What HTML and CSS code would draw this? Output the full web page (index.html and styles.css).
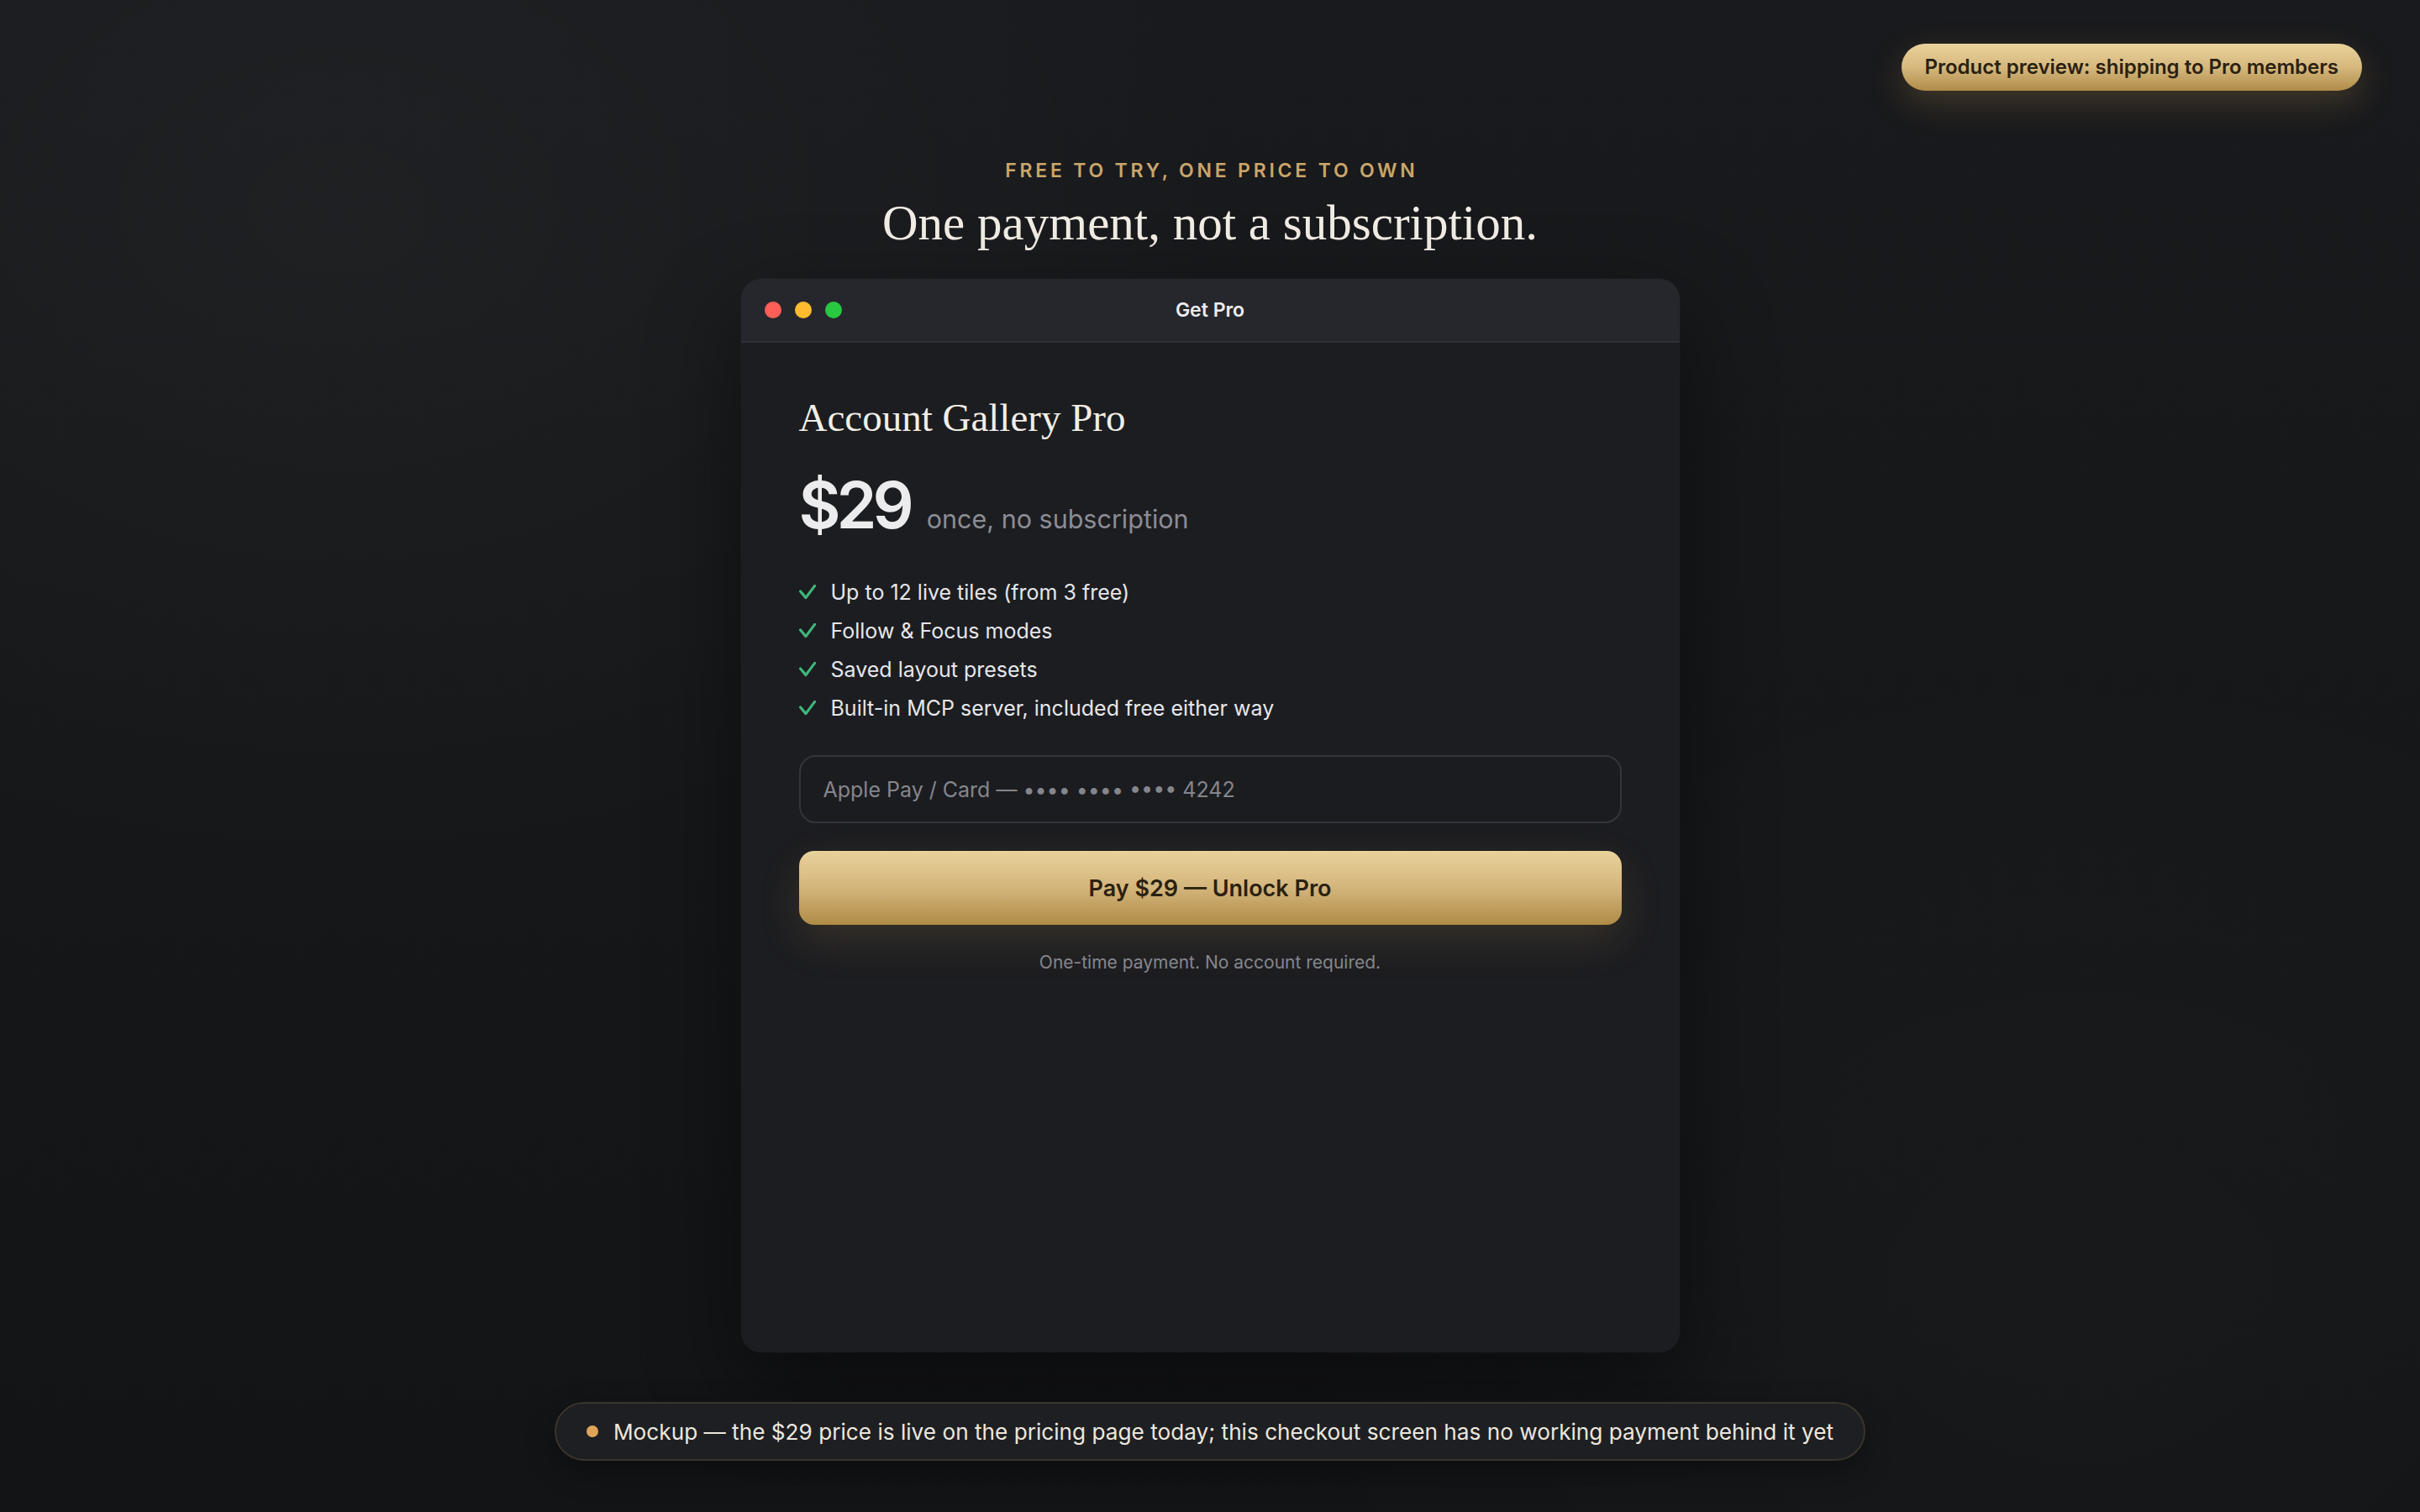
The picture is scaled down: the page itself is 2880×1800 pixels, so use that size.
FILE: index.html
```html
<!DOCTYPE html>
<html lang="en">
<head>
<meta charset="utf-8">
<title>Get Pro</title>
<link rel="stylesheet" href="styles.css">
</head>
<body>
<div class="badge">Product preview: shipping to Pro members</div>
<main class="page">
  <p class="eyebrow">FREE TO TRY, ONE PRICE TO OWN</p>
  <h1 class="headline">One payment, not a subscription.</h1>
  <section class="window">
    <header class="titlebar">
      <div class="lights">
        <span class="light red"></span>
        <span class="light yellow"></span>
        <span class="light green"></span>
      </div>
      <div class="title">Get Pro</div>
      <div></div>
    </header>
    <div class="content">
      <h2 class="product">Account Gallery Pro</h2>
      <div class="price-row">
        <span class="price">$29</span>
        <span class="price-note">once, no subscription</span>
      </div>
      <ul class="features">
        <li><svg class="check" viewBox="0 0 20 18"><polyline points="1.6,8 8,15.6 18.6,1.4"/></svg><span>Up to 12 live tiles (from 3 free)</span></li>
        <li><svg class="check" viewBox="0 0 20 18"><polyline points="1.6,8 8,15.6 18.6,1.4"/></svg><span>Follow &amp; Focus modes</span></li>
        <li><svg class="check" viewBox="0 0 20 18"><polyline points="1.6,8 8,15.6 18.6,1.4"/></svg><span>Saved layout presets</span></li>
        <li><svg class="check" viewBox="0 0 20 18"><polyline points="1.6,8 8,15.6 18.6,1.4"/></svg><span>Built-in MCP server, included free either way</span></li>
      </ul>
      <div class="card-field">Apple Pay / Card — •••• •••• •••• 4242</div>
      <button class="pay">Pay $29 — Unlock Pro</button>
      <p class="fine">One-time payment. No account required.</p>
    </div>
  </section>
  <div class="notice"><span class="notice-dot"></span><span>Mockup — the $29 price is live on the pricing page today; this checkout screen has no working payment behind it yet</span></div>
</main>
</body>
</html>
```
FILE: styles.css
```css
html, body {
  margin: 0;
  padding: 0;
}
body {
  min-height: 1800px;
  font-family: Inter, "Noto Sans", "Liberation Sans", sans-serif;
  color: #e8e8ea;
  background:
    radial-gradient(ellipse 38% 45% at 14% 14%, rgba(255,255,255,0.03), rgba(255,255,255,0) 100%),
    radial-gradient(ellipse 35% 45% at 86% 86%, rgba(255,255,255,0.018), rgba(255,255,255,0) 100%),
    linear-gradient(180deg, #191a1d 0%, #161719 55%, #131416 100%);
  position: relative;
  overflow: hidden;
}
.badge {
  position: absolute;
  top: 52px;
  right: 69px;
  height: 56px;
  line-height: 56px;
  padding: 0 28px;
  border-radius: 28px;
  font-size: 24px;
  font-weight: 600;
  color: #2a2110;
  background: linear-gradient(180deg, #e9d29b 0%, #d6b87e 50%, #b08c48 100%);
  box-shadow: 0 14px 40px rgba(212, 168, 86, 0.22);
}
.page {
  display: flex;
  flex-direction: column;
  align-items: center;
  padding-top: 187px;
}
.eyebrow {
  margin: 0;
  font-size: 23px;
  line-height: 32px;
  font-weight: 600;
  letter-spacing: 0.165em;
  color: #c9a66b;
  padding-left: 0.165em;
}
.headline {
  margin: 13px 0 0;
  font-family: "Liberation Serif", "DejaVu Serif", serif;
  font-weight: 400;
  font-size: 59px;
  line-height: 66px;
  color: #f2eee6;
}
.window {
  margin-top: 34px;
  width: 1117px;
  height: 1278px;
  box-sizing: border-box;
  background: #1c1d21;
  border-radius: 24px;
  overflow: hidden;
  box-shadow: 0 40px 110px rgba(0, 0, 0, 0.45), 0 0 0 1px rgba(255, 255, 255, 0.02);
}
.titlebar {
  height: 74px;
  border-bottom: 2px solid #2f3035;
  background: #26272c;
  display: grid;
  grid-template-columns: 1fr auto 1fr;
  align-items: center;
}
.lights {
  display: flex;
  gap: 16px;
  padding-left: 28px;
}
.light {
  width: 20px;
  height: 20px;
  border-radius: 50%;
}
.red { background: #ff5f57; }
.yellow { background: #febc2e; }
.green { background: #28c840; }
.title {
  font-size: 23px;
  font-weight: 600;
  color: #ececee;
}
.content {
  padding: 61px 69px 0;
}
.product {
  margin: 0;
  font-family: "Liberation Serif", "DejaVu Serif", serif;
  font-weight: 400;
  font-size: 47px;
  line-height: 56px;
  color: #f2eee6;
}
.price-row {
  margin-top: 36px;
  display: flex;
  align-items: baseline;
  gap: 20px;
}
.price {
  font-size: 77px;
  line-height: 80px;
  font-weight: 600;
  letter-spacing: -0.065em;
  color: #ececee;
}
.price-note {
  font-size: 30.5px;
  color: #8c8c93;
}
.features {
  list-style: none;
  margin: 41px 0 0;
  padding: 0;
}
.features li {
  display: flex;
  align-items: center;
  gap: 18px;
  font-size: 25px;
  line-height: 46px;
  color: #e6e6e9;
}
.check {
  width: 20px;
  height: 18px;
  flex: none;
  fill: none;
  stroke: #3fb67c;
  stroke-width: 3.2;
  stroke-linecap: round;
  stroke-linejoin: round;
}
.card-field {
  margin-top: 33px;
  height: 81px;
  box-sizing: border-box;
  border: 2px solid #34353b;
  border-radius: 20px;
  background: #1b1c20;
  display: flex;
  align-items: center;
  padding-left: 27px;
  font-size: 25px;
  color: #85868c;
}
.pay {
  display: block;
  width: 100%;
  margin-top: 33px;
  height: 88px;
  border: none;
  border-radius: 18px;
  font-family: inherit;
  font-size: 27px;
  font-weight: 600;
  color: #2a2110;
  background: linear-gradient(180deg, #e9d29b 0%, #d3b57c 50%, #af8b45 100%);
  box-shadow: 0 18px 50px rgba(200, 158, 78, 0.16);
}
.fine {
  margin: 30px 0 0;
  text-align: center;
  font-size: 21px;
  line-height: 30px;
  color: #85868c;
}
.notice {
  margin-top: 59px;
  height: 70px;
  box-sizing: border-box;
  padding: 0 36px;
  border: 2px solid #38352b;
  border-radius: 35px;
  background: #1e1f23;
  display: flex;
  align-items: center;
  gap: 18px;
  font-size: 26.2px;
  color: #ece7dd;
  box-shadow: 0 12px 34px rgba(0, 0, 0, 0.35);
}
.notice-dot {
  width: 14px;
  height: 14px;
  border-radius: 50%;
  background: #e0a458;
  flex: none;
}
```
